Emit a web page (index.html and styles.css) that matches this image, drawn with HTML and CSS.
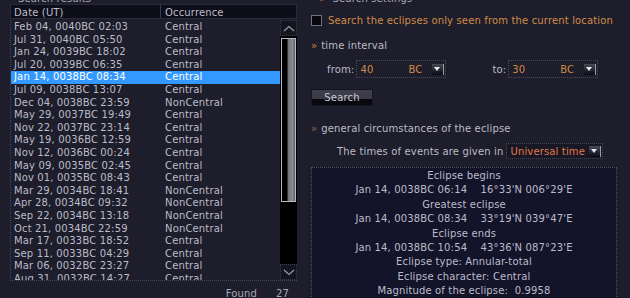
FILE: index.html
```html
<!DOCTYPE html>
<html lang="en">
<head>
  <meta charset="UTF-8" />
  <title>Eclipse search</title>
  <link rel="stylesheet" href="styles.css">
</head>
<body>
  <div class="app">

    <!-- Results list -->
    <div class="results">
      <div class="legend">Search results</div>
      <div class="table-head">
        <div class="col-date">Date (UT)</div>
        <div class="col-occ">Occurrence</div>
      </div>
      <div class="list-box">
        <div class="rows" id="rows"></div>
        <div class="scrollbar">
          <div class="sb-up"><svg width="12" height="7" viewBox="0 0 12 7"><path d="M1 6 L6 1.5 L11 6" fill="none" stroke="#9a9aa8" stroke-width="1.2"/></svg></div>
          <div class="sb-track"><div class="sb-thumb"></div></div>
          <div class="sb-down"><svg width="12" height="7" viewBox="0 0 12 7"><path d="M1 1 L6 5.5 L11 1" fill="none" stroke="#9a9aa8" stroke-width="1.2"/></svg></div>
        </div>
      </div>
      <div class="found"><span>Found</span><span class="found-num">27</span></div>
    </div>

    <!-- Settings -->
    <div class="settings">
      <div class="legend"><span class="arrows">»</span> Search settings</div>
      <label class="check-row">
        <span class="checkbox"></span>
        <span class="check-text">Search the eclipses only seen from the current location</span>
      </label>

      <div class="section"><span class="arrows">»</span>time interval</div>
      <div class="interval">
        <span class="lbl">from:</span>
        <div class="year-box">
          <span class="year">40</span><span class="era">BC</span>
          <span class="drop"><svg width="6" height="4" viewBox="0 0 6 4"><path d="M0 0 H6 L3 4 Z" fill="#e8e8ee"/></svg></span>
        </div>
        <span class="lbl lbl-to">to:</span>
        <div class="year-box">
          <span class="year">30</span><span class="era">BC</span>
          <span class="drop"><svg width="6" height="4" viewBox="0 0 6 4"><path d="M0 0 H6 L3 4 Z" fill="#e8e8ee"/></svg></span>
        </div>
      </div>
      <button class="search-btn">Search</button>

      <div class="section section-dim"><span class="arrows dim">»</span>general circumstances of the eclipse</div>
      <div class="times-row">
        <span>The times of events are given in</span>
        <div class="time-select">
          <span>Universal time</span>
          <span class="drop"><svg width="6" height="4" viewBox="0 0 6 4"><path d="M0 0 H6 L3 4 Z" fill="#e8e8ee"/></svg></span>
        </div>
      </div>
      <div class="circ">
        <div>Eclipse begins</div>
        <div class="pre">Jan 14, 0038BC 06:14    16°33'N 006°29'E</div>
        <div>Greatest eclipse</div>
        <div class="pre">Jan 14, 0038BC 08:34    33°19'N 039°47'E</div>
        <div>Eclipse ends</div>
        <div class="pre">Jan 14, 0038BC 10:54    43°36'N 087°23'E</div>
        <div>Eclipse type: Annular-total</div>
        <div>Eclipse character: Central</div>
        <div class="pre">Magnitude of the eclipse:  0.9958</div>
      </div>
    </div>
  </div>

  <script>
    // строки таблицы
    const eclipses = [
      ['Feb 04, 0040BC 02:03', 'Central'],
      ['Jul 31, 0040BC 05:50', 'Central'],
      ['Jan 24, 0039BC 18:02', 'Central'],
      ['Jul 20, 0039BC 06:35', 'Central'],
      ['Jan 14, 0038BC 08:34', 'Central'],
      ['Jul 09, 0038BC 13:07', 'Central'],
      ['Dec 04, 0038BC 23:59', 'NonCentral'],
      ['May 29, 0037BC 19:49', 'Central'],
      ['Nov 22, 0037BC 23:14', 'Central'],
      ['May 19, 0036BC 12:59', 'Central'],
      ['Nov 12, 0036BC 00:24', 'Central'],
      ['May 09, 0035BC 02:45', 'Central'],
      ['Nov 01, 0035BC 08:43', 'Central'],
      ['Mar 29, 0034BC 18:41', 'NonCentral'],
      ['Apr 28, 0034BC 09:32', 'NonCentral'],
      ['Sep 22, 0034BC 13:18', 'NonCentral'],
      ['Oct 21, 0034BC 22:59', 'NonCentral'],
      ['Mar 17, 0033BC 18:52', 'Central'],
      ['Sep 11, 0033BC 04:29', 'Central'],
      ['Mar 06, 0032BC 23:27', 'Central'],
      ['Aug 31, 0032BC 14:27', 'Central']
    ];
    const rows = document.getElementById('rows');
    eclipses.forEach(([date, occ], i) => {
      const row = document.createElement('div');
      row.className = 'row' + (i === 4 ? ' selected' : '');
      row.innerHTML = `<div class="col-date">${date}</div><div class="col-occ">${occ}</div>`;
      rows.appendChild(row);
    });
  </script>
</body>
</html>
```

FILE: styles.css
```css
body {
  margin: 0;
  background: #1d1d2b;
  color: #bcbcc8;
  font-family: "DejaVu Sans", Verdana, sans-serif;
  font-size: 10px;
  letter-spacing: 0.15px;
  overflow: hidden;
}
.app {
  display: flex;
  height: 298px;
}
.legend {
  height: 10px;
  margin-top: -6px;
  line-height: 10px;
  color: #a8a8b4;
  padding-left: 8px;
}
.arrows {
  color: #d0843c;
  font-size: 10px;
  margin-right: 4px;
}
.arrows.dim {
  color: #8a6a50;
}

/* left part */
.results {
  width: 287px;
  margin-left: 10px;
  display: flex;
  flex-direction: column;
}
.table-head {
  display: flex;
  height: 15px;
  line-height: 15px;
  background: #0e0e1a;
  border: 1px solid #2a2a3a;
  box-sizing: border-box;
  margin-bottom: 1px;
}
.table-head .col-date {
  border-right: 1px solid #3a3a4c;
}
.col-date {
  width: 150px;
  padding-left: 3px;
  box-sizing: border-box;
}
.col-occ {
  padding-left: 4px;
}
.list-box {
  display: flex;
  height: 260px;
  border-left: 1px dotted #44445a;
  border-bottom: 1px dotted #44445a;
}
.rows {
  flex: 1;
  overflow: hidden;
  padding-top: 1px;
}
.row {
  display: flex;
  height: 12.6px;
  line-height: 12.6px;
}
.row .col-date {
  padding-left: 3px;
}
.row.selected {
  background: #3399ff;
  color: #ffffff;
}
.scrollbar {
  width: 17px;
  display: flex;
  flex-direction: column;
  background: #15151f;
}
.sb-up, .sb-down {
  height: 16px;
  display: flex;
  align-items: center;
  justify-content: center;
  border: 1px dotted #3a3a4c;
  box-sizing: border-box;
}
.sb-track {
  flex: 1;
  background: #000;
  padding: 2px 1px 0;
}
.sb-thumb {
  height: 164px;
  border: 1px solid #b8b8c0;
  background: linear-gradient(to right, #000 0, #000 40%, #6e6e78 45%, #8c8c94 80%, #5a5a64 100%);
  box-sizing: border-box;
}
.found {
  display: flex;
  justify-content: flex-end;
  gap: 19px;
  margin-top: 7px;
  padding-right: 8px;
  color: #a8a8b4;
}

/* right part */
.settings {
  flex: 1;
  margin-left: 8px;
  padding-left: 6px;
}
.check-row {
  display: flex;
  align-items: center;
  margin-top: 11px;
}
.checkbox {
  width: 9px;
  height: 9px;
  background: #06060c;
  border: 1px solid #70707e;
  margin-right: 6px;
}
.check-text {
  color: #d08c48;
}
.section {
  margin-top: 14px;
  height: 12px;
  line-height: 12px;
}
.section-dim {
  margin-top: 17px;
}
.interval {
  display: flex;
  align-items: center;
  margin-top: 8px;
  padding-left: 16px;
}
.lbl {
  margin-right: 2px;
}
.lbl-to {
  margin-left: 46px;
}
.year-box {
  display: flex;
  align-items: center;
  width: 90px;
  height: 18px;
  border: 1px dotted #4a4a5c;
  box-sizing: border-box;
  padding-left: 3px;
  color: #d08c48;
}
.year {
  width: 48px;
}
.era {
  width: 24px;
}
.drop {
  width: 10px;
  height: 11px;
  background: linear-gradient(#4a4a58, #0a0a12);
  display: flex;
  align-items: center;
  justify-content: center;
  border-right: 1px solid #9a9aa8;
  padding-right: 1px;
}
.search-btn {
  display: block;
  margin-top: 11px;
  width: 62px;
  height: 17px;
  padding: 0;
  border: 1px solid #15151f;
  background: linear-gradient(#3e3e4c 0, #3a3a48 60%, #08080e 60%, #08080e 100%);
  color: #c8c8d4;
  font-family: "DejaVu Sans", Verdana, sans-serif;
  font-size: 10px;
  letter-spacing: 0.15px;
}
.times-row {
  display: flex;
  align-items: center;
  margin-top: 8px;
  padding-left: 26px;
  gap: 3px;
}
.time-select {
  display: flex;
  align-items: center;
  justify-content: space-between;
  width: 97px;
  height: 16px;
  background: #171725;
  border: 1px dotted #44445a;
  box-sizing: border-box;
  padding: 0 1px 0 3px;
  color: #e07a4a;
}
.circ {
  margin-top: 8px;
  width: 306px;
  height: 132px;
  background: #13132a;
  border: 1px dotted #50506a;
  box-sizing: border-box;
  text-align: center;
  padding-top: 1px;
  line-height: 14.4px;
}
.pre {
  white-space: pre;
}
```
